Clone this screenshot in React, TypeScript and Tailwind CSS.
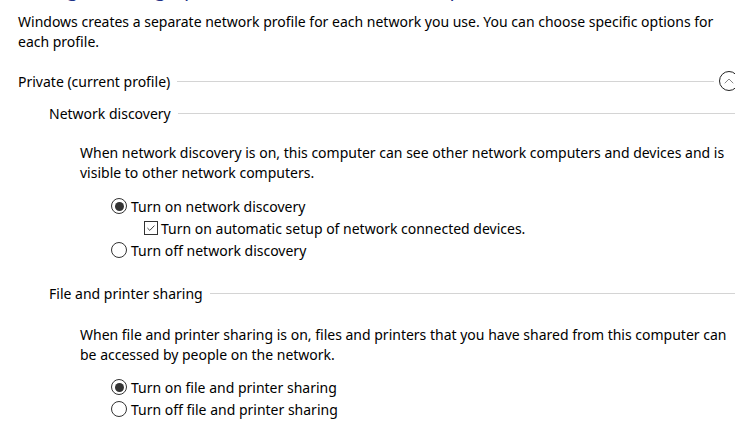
import { ChevronUp } from 'lucide-react';

function Radio({ checked }: { checked?: boolean }) {
  return (
    <span className="w-4 h-4 rounded-full border border-[#333] bg-white flex items-center justify-center flex-shrink-0">
      {checked && <span className="w-[9px] h-[9px] rounded-full bg-[#333]" />}
    </span>
  );
}

function Checkbox() {
  return (
    <span className="w-[14px] h-[14px] border border-[#333] bg-white flex items-center justify-center flex-shrink-0">
      <svg viewBox="0 0 14 14" className="w-[14px] h-[14px]">
        <path d="M2.8 7 L5.6 9.8 L11 4.2" fill="none" stroke="#333" strokeWidth="1.1" />
      </svg>
    </span>
  );
}

function SectionHeader({ title, indent, collapse }: { title: string; indent: string; collapse?: boolean }) {
  return (
    <div className={`flex items-center h-5 ${indent}`}>
      <span className="whitespace-nowrap">{title}</span>
      <span className="flex-1 h-px bg-[#d4d4d4] ml-[7px]" />
      {collapse && (
        <span className="ml-[5px] w-5 h-5 rounded-full border border-[#222] flex items-center justify-center flex-shrink-0 mr-[-2px]">
          <ChevronUp className="w-4 h-4 text-[#888]" strokeWidth={1.5} />
        </span>
      )}
    </div>
  );
}

function Option({ label, checked, indent = 'pl-[111px]' }: { label: string; checked?: boolean; indent?: string }) {
  return (
    <div className={`flex items-center gap-[4px] h-[22px] ${indent}`}>
      <Radio checked={checked} />
      <span>{label}</span>
    </div>
  );
}

export default function App() {
  return (
    <div className="w-[735px] h-[435px] overflow-hidden bg-white text-black text-[14px] font-['Noto_Sans',sans-serif]">
      <h1 className="mt-[-25px] pl-[18px] text-[20px] leading-[28px] text-[#1e3287] whitespace-nowrap">
        Change sharing options for different network profiles
      </h1>

      <p className="mt-[9px] pl-[18px] pr-[2px] leading-[20px]">
        Windows creates a separate network profile for each network you use. You can choose specific options for
        each profile.
      </p>

      <div className="mt-[19px] w-[737px]">
        <SectionHeader title="Private (current profile)" indent="pl-[18px]" collapse />
      </div>

      <div className="mt-[12px]">
        <SectionHeader title="Network discovery" indent="pl-[49px]" />
      </div>

      <p className="mt-[20px] pl-[80px] pr-[2px] leading-[20px]">
        When network discovery is on, this computer can see other network computers and devices and is
        visible to other network computers.
      </p>

      <div className="mt-[12px]">
        <Option label="Turn on network discovery" checked />
        <div className="flex items-center gap-[3px] h-[22px] pl-[144px]">
          <Checkbox />
          <span>Turn on automatic setup of network connected devices.</span>
        </div>
        <Option label="Turn off network discovery" />
      </div>

      <div className="mt-[22px]">
        <SectionHeader title="File and printer sharing" indent="pl-[49px]" />
      </div>

      <p className="mt-[22px] pl-[80px] pr-[2px] leading-[20px]">
        When file and printer sharing is on, files and printers that you have shared from this computer can
        be accessed by people on the network.
      </p>

      <div className="mt-[11px]">
        <Option label="Turn on file and printer sharing" checked />
        <Option label="Turn off file and printer sharing" />
      </div>
    </div>
  );
}
